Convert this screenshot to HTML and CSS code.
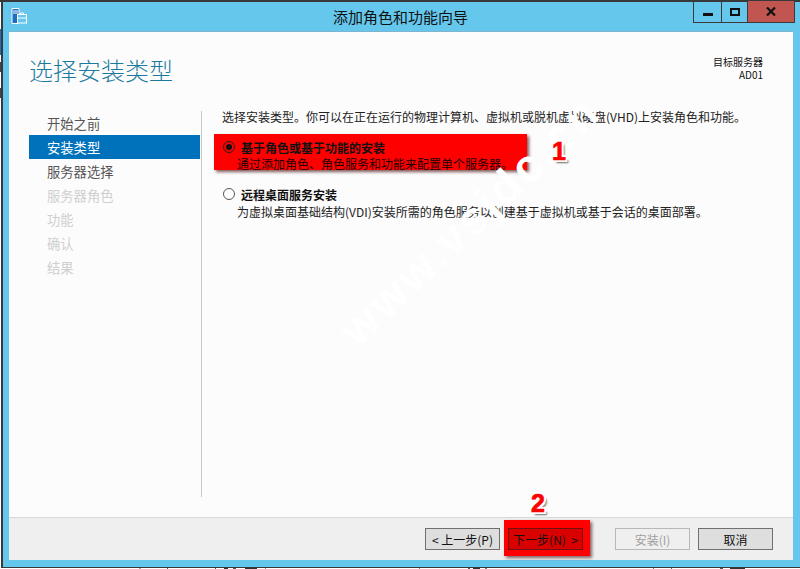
FILE: index.html
```html
<!DOCTYPE html>
<html lang="zh-CN">
<head>
<meta charset="utf-8">
<title>添加角色和功能向导</title>
<link rel="stylesheet" href="styles.css">
</head>
<body>
<div class="window">
  <header class="titlebar">
    <svg class="app-icon" width="16" height="16" viewBox="0 0 16 16">
      <path d="M1 0.5h7v6h-1v9H1z" fill="#1f6fc0" stroke="#fff" stroke-width="1"/>
      <path d="M2 3h5M2 5h5" stroke="#fff" stroke-width="1"/>
      <rect x="6.5" y="6.5" width="9" height="8.5" fill="#66c7ec" stroke="#fff"/>
      <path d="M9.5 6.500v-1.500h3v1.500M7 10h8" stroke="#fff" fill="none"/>
    </svg>
    <h1 class="window-title">添加角色和功能向导</h1>
    <div class="caption">
      <span class="cap-btn cap-min"><i class="glyph-min"></i></span>
      <span class="cap-btn cap-max"><i class="glyph-max"></i></span>
      <span class="cap-btn cap-close">
        <svg width="10" height="9" viewBox="0 0 10 9"><path d="M1 0.500L9 8.500M9 0.500L1 8.500" stroke="#111" stroke-width="2.200"/></svg>
      </span>
    </div>
  </header>
  <div class="client">
    <div class="head">
      <h2 class="page-title">选择安装类型</h2>
      <div class="target"><div>目标服务器</div><div>AD01</div></div>
    </div>
    <div class="main">
      <nav class="nav">
        <div class="nav-item">开始之前</div>
        <div class="nav-item active">安装类型</div>
        <div class="nav-item">服务器选择</div>
        <div class="nav-item off">服务器角色</div>
        <div class="nav-item off">功能</div>
        <div class="nav-item off">确认</div>
        <div class="nav-item off">结果</div>
      </nav>
      <section class="content">
        <p class="intro">选择安装类型。你可以在正在运行的物理计算机、虚拟机或脱机虚拟硬盘(VHD)上安装角色和功能。</p>
        <div class="option red">
          <div class="opt-title"><span class="radio on"></span><b>基于角色或基于功能的安装</b></div>
          <div class="opt-desc">通过添加角色、角色服务和功能来配置单个服务器。</div>
        </div>
        <div class="option second">
          <div class="opt-title"><span class="radio"></span><b>远程桌面服务安装</b></div>
          <div class="opt-desc">为虚拟桌面基础结构(VDI)安装所需的角色服务以创建基于虚拟机或基于会话的桌面部署。</div>
        </div>
      </section>
    </div>
    <footer class="footer">
      <button class="btn">&lt; 上一步(P)</button>
      <span class="next-mark"><button class="btn next">下一步(N)&nbsp; &gt;</button></span>
      <button class="btn disabled">安装(I)</button>
      <button class="btn cancel">取消</button>
    </footer>
  </div>
</div>
<div class="remnants"></div>
<div class="watermark">www.vsjdc.cn</div>
<div class="num num1">1</div>
<div class="num num2">2</div>
</body>
</html>
```
FILE: styles.css
```css
* { box-sizing: border-box; }
html, body { margin: 0; height: 569px; overflow: hidden; background: #fff; }
body {
  font-family: "Noto Sans CJK SC", "Liberation Sans", sans-serif; font-size: 12px; color: #1a1a1a; position: relative;
  background: linear-gradient(#37393b 0 2px, #fff 2px 29px, #1f6fc0 29px 55px, #fff 55px 62px, #444 62px 72px, #fff 72px 88px, #444 88px 98px, #fff 98px) 0 0 / 1px 100% no-repeat #fff;
}

.window { width: 799px; height: 568px; margin-left: 1px; background: #66c7ec; border: 2px solid #37393b; border-right: 0; border-bottom-width: 1px; padding: 0 7px 7px 6px; display: flex; flex-direction: column; }

.titlebar { height: 30px; flex: none; display: flex; align-items: flex-start; position: relative; }
.app-icon { margin: 6px 0 0 2px; flex: none; }
.window-title { position: absolute; left: 0; right: 1px; top: 5px; margin: 0; text-align: center; font-size: 15px; font-weight: 400; line-height: 20px; color: #111; }
.caption { position: absolute; top: -1px; right: -2px; display: flex; height: 22px; border: 1px solid #3e3a3a; border-top: 0; }
.cap-btn { display: flex; align-items: center; justify-content: center; height: 100%; }
.cap-min { width: 28px; border-right: 1px solid #3e3a3a; }
.cap-max { width: 26px; border-right: 1px solid #3e3a3a; }
.cap-close { width: 46px; background: #c0564f; }
.glyph-min { width: 10px; height: 3px; background: #111; margin-top: 5px; }
.glyph-max { width: 10px; height: 8px; border: 2px solid #111; }

.client { flex: 1; background: #fcfcfc; display: flex; flex-direction: column; min-height: 0; box-shadow: 0 -1px 0 #7fb4d0; }
.head { height: 79px; flex: none; display: flex; justify-content: space-between; padding: 0 30px 0 20px; }
.page-title { margin: 20px 0 0; font-size: 24px; font-weight: 300; line-height: 36px; color: #1b7a9e; }
.target { margin-top: 23px; text-align: right; font-size: 10px; line-height: 13px; color: #111; }

.main { flex: 1; display: flex; min-height: 0; }
.nav { width: 193px; height: 386px; padding-left: 20px; border-right: 1px solid #c8c8c8; flex: none; }
.nav-item { height: 24px; line-height: 25px; font-size: 13.3px; color: #555; padding-left: 18px; width: 171px; overflow: hidden; }
.nav-item.active { background: #0072bc; color: #fff; }
.nav-item.off { color: #cfcfcf; }

.content { flex: 1; padding-left: 20px; min-width: 0; }
.intro { margin: 0; line-height: 12px; font-size: 12px; color: #222; white-space: nowrap; }

.red { width: 313px; height: 36px; margin: 11px 0 0 -8px; background: #f00; box-shadow: 2px 2px 3px rgba(60,0,0,.65); padding: 4px 0 0 9px; }
.second { margin: 15px 0 0 1px; }
.opt-title { display: flex; align-items: center; height: 18px; font-size: 12px; }
.opt-title b { font-weight: 700; margin-left: 6px; color: #111; }
.radio { width: 12px; height: 12px; border-radius: 50%; border: 1px solid #555; background: #fff; flex: none; position: relative; }
.radio.on { background: transparent; border-color: #222; }
.radio.on::after { content: ""; position: absolute; left: 2px; top: 2px; width: 6px; height: 6px; border-radius: 50%; background: #111; }
.opt-desc { padding-left: 14px; line-height: 15px; font-size: 12px; color: #222; white-space: nowrap; }
.red .opt-desc { color: #220000; }
.second .opt-desc { margin-top: 1px; }

.footer { height: 43px; flex: none; background: #efefef; border-top: 1px solid #d8d8d8; display: flex; align-items: flex-start; padding: 10px 0 0 416px; }
.btn { width: 75px; height: 22px; padding: 1px 0 0; background: #dedede; border: 1px solid #707070; font: 12px/19px "Noto Sans CJK SC", "Liberation Sans", sans-serif; color: #111; flex: none; }
.next-mark { width: 86px; height: 36px; margin: -8px 0 0 4px; background: #f00; box-shadow: 2px 2px 3px rgba(60,0,0,.6); padding: 8px 0 0 4px; flex: none; display: block; }
.next { background: #d90000; border-color: #701010; display: block; }
.disabled { margin-left: 25px; background: #efefef; border-color: #b8b8b8; color: #a0a0a0; }
.cancel { margin-left: 8px; }

.remnants { height: 1px; background: linear-gradient(90deg, #fff 139px, #aaa 139px 141px, #fff 141px 167px, #555 167px 168px, #fff 168px 215px, #555 215px 216px, #fff 216px 224px, #333 224px 228px, #fff 228px 233px, #555 233px 236px, #fff 236px 245px, #333 245px 257px, #fff 257px 265px, #888 265px 266px, #fff 266px 419px, #888 419px 420px, #fff 420px 468px, #555 468px 470px, #fff 470px 473px, #333 473px 480px, #fff 480px 485px, #777 485px 487px, #fff 487px 653px, #777 653px 654px, #fff 654px 671px, #666 671px 672px, #fff 672px 720px, #555 720px 723px, #fff 723px 730px, #333 730px 745px, #fff 745px); }

.num { position: absolute; font-family: "Liberation Sans", sans-serif; font-weight: 700; font-size: 25px; line-height: 28px; color: #f00; -webkit-text-stroke: 0.7px #f00; text-shadow: -2px 0 0 #fff, 2px 0 0 #fff, 0 -2px 0 #fff, 0 2px 0 #fff, -2px -2px 0 #fff, 2px 2px 0 #fff, 2px -2px 0 #fff, -2px 2px 0 #fff, 3px 3px 2px #666; }
.num1 { left: 552px; top: 137px; }
.num2 { left: 531px; top: 489px; }

.watermark { position: absolute; left: 364px; top: 305px; font-family: "Liberation Sans", sans-serif; font-weight: 700; font-size: 46px; line-height: 50px; letter-spacing: 3px; color: #fff; white-space: nowrap; transform: rotate(-43.5deg); transform-origin: 0 100%; }
```
